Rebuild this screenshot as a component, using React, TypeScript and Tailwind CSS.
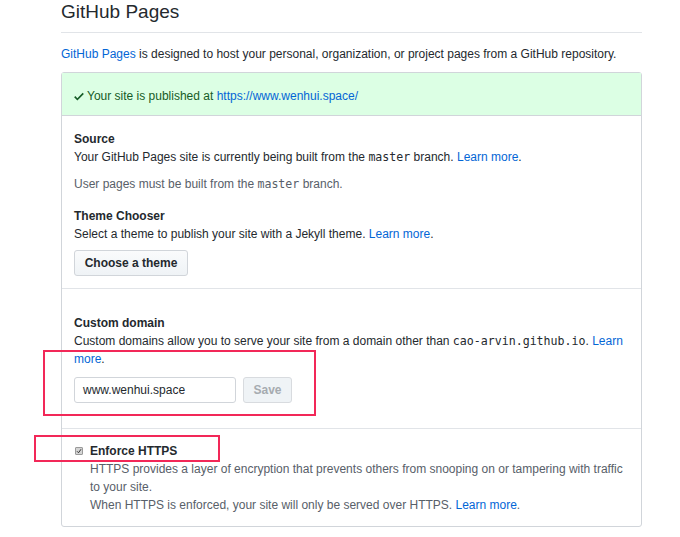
import React from "react";

const link = "text-[#0366d6]";
const mono = { fontFamily: '"DejaVu Sans Mono", "Liberation Mono", monospace' } as const;

export default function App() {
  return (
    <div
      className="relative w-[680px] h-[537px] overflow-hidden bg-white text-[#24292e] text-[12px] leading-[18px]"
      style={{ fontFamily: '"Liberation Sans", Arial, sans-serif' }}
    >
      <div className="ml-[61px] w-[581px]">
        <h2 className="text-[19px] leading-[24px] font-normal pb-2 border-b border-[#e1e4e8]">GitHub Pages</h2>
        <p className="mt-3 mb-[9px]">
          <span className={link}>GitHub Pages</span> is designed to host your personal, organization, or project pages from a GitHub repository.
        </p>
        <div className="border border-[#d1d5da] rounded-[3px]">
          <div className="h-[43px] bg-[#dcffe4] border-b border-[#d1d5da] flex items-center px-3 pt-[3px] text-[#165c26]">
            <svg width="10" height="13" viewBox="0 0 12 16" className="mr-[3px] mt-[1px]" fill="#165c26">
              <path d="M12 5l-8 8-4-4 1.5-1.5L4 10l6.5-6.5L12 5z" />
            </svg>
            <span>
              Your site is published at <span className={link}>https://www.wenhui.space/</span>
            </span>
          </div>
          <div className="px-3 pt-[14px] pb-3 border-b border-[#e1e4e8]">
            <div className="font-bold">Source</div>
            <div>
              Your GitHub Pages site is currently being built from the <span style={mono} className="text-[11.6px]">master</span> branch.{" "}
              <span className={link}>Learn more</span>.
            </div>
            <div className="mt-[9px] text-[#586069]">
              User pages must be built from the <span style={mono} className="text-[11.6px]">master</span> branch.
            </div>
            <div className="mt-[14px] font-bold">Theme Chooser</div>
            <div>
              Select a theme to publish your site with a Jekyll theme. <span className={link}>Learn more</span>.
            </div>
            <button className="mt-[7px] h-[26px] w-[114px] rounded-[3px] border border-[#d1d5da] bg-gradient-to-b from-[#fafbfc] to-[#eff3f6] font-bold text-[#24292e] text-[12px]">
              Choose a theme
            </button>
          </div>
          <div className="px-3 pt-[25px] pb-[25px] border-b border-[#e1e4e8]">
            <div className="font-bold">Custom domain</div>
            <div>
              Custom domains allow you to serve your site from a domain other than{" "}
              <span style={mono} className="text-[11.6px]">cao-arvin.github.io</span>. <span className={link}>Learn more</span>.
            </div>
            <div className="mt-[9px] flex gap-[7px]">
              <div className="h-[26px] w-[162px] border border-[#d1d5da] rounded-[3px] flex items-center px-2 text-[#24292e]">
                www.wenhui.space
              </div>
              <button className="h-[26px] w-[49px] rounded-[3px] border border-[#d8dbdf] bg-[#eff3f6] font-bold text-[#a6abb0] text-[12px]">
                Save
              </button>
            </div>
          </div>
          <div className="px-3 pt-[13px] pb-3">
            <div className="flex items-center">
              <span className="ml-[1px] mr-[7px] w-[8px] h-[8px] rounded-[1px] bg-[#d4d4d4] border border-[#9a9a9a] flex items-center justify-center">
                <svg width="6" height="6" viewBox="0 0 12 12">
                  <path d="M2 6.5l3 3 5-7" stroke="#333" strokeWidth="2" fill="none" />
                </svg>
              </span>
              <span className="font-bold">Enforce HTTPS</span>
            </div>
            <div className="pl-[16px] text-[#586069]">
              <div>
                HTTPS provides a layer of encryption that prevents others from snooping on or tampering with traffic to your site.
              </div>
              <div>
                When HTTPS is enforced, your site will only be served over HTTPS. <span className={link}>Learn more</span>.
              </div>
            </div>
          </div>
        </div>
      </div>

      <div className="absolute left-[43px] top-[350px] w-[273px] h-[66px] border-2 border-[#f22858]" />
      <div className="absolute left-[34px] top-[435px] w-[186px] h-[27px] border-2 border-[#f22858]" />
    </div>
  );
}
